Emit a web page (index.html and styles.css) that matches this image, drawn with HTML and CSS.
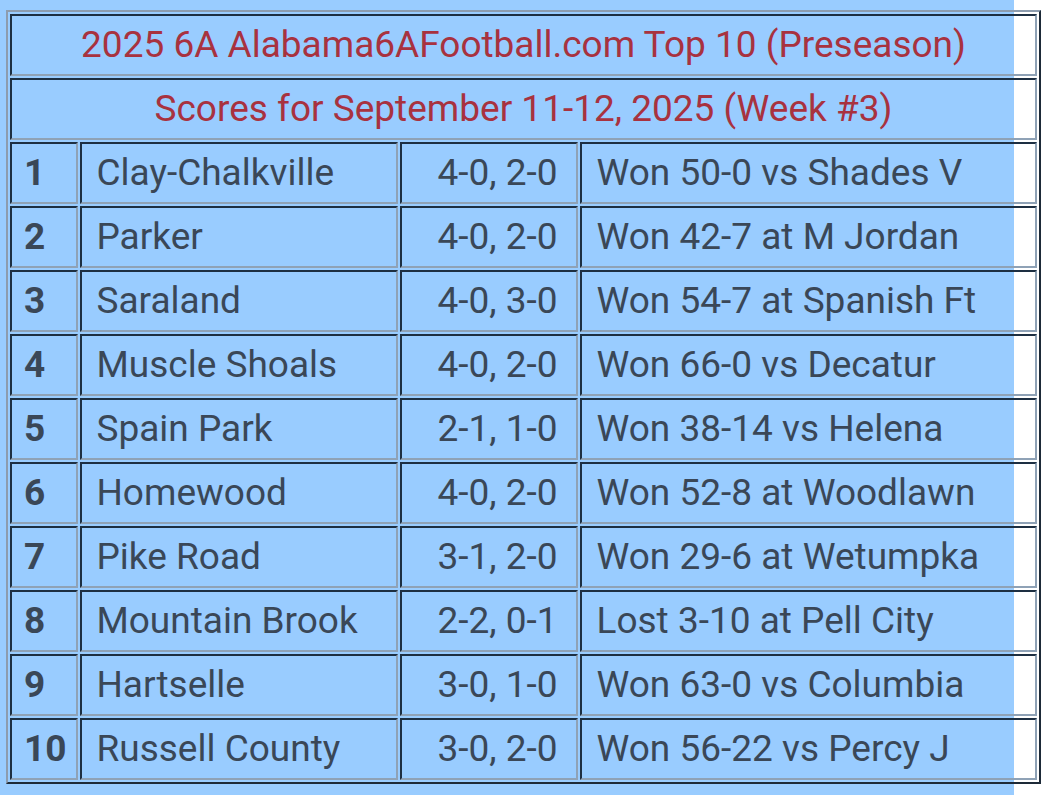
FILE: index.html
```html
<!DOCTYPE html>
<html>
<head>
<meta charset="utf-8">
<link rel="stylesheet" href="styles.css">
</head>
<body>
<div class="page">
  <table class="rank">
    <tr><td class="head" colspan="4">2025 6A Alabama6AFootball.com Top 10 (Preseason)</td></tr>
    <tr><td class="head" colspan="4">Scores for September 11-12, 2025 (Week #3)</td></tr>
    <tr><td class="num">1</td><td class="team">Clay-Chalkville</td><td class="rec">4-0, 2-0</td><td class="res">Won 50-0 vs Shades V</td></tr>
    <tr><td class="num">2</td><td class="team">Parker</td><td class="rec">4-0, 2-0</td><td class="res">Won 42-7 at M Jordan</td></tr>
    <tr><td class="num">3</td><td class="team">Saraland</td><td class="rec">4-0, 3-0</td><td class="res">Won 54-7 at Spanish Ft</td></tr>
    <tr><td class="num">4</td><td class="team">Muscle Shoals</td><td class="rec">4-0, 2-0</td><td class="res">Won 66-0 vs Decatur</td></tr>
    <tr><td class="num">5</td><td class="team">Spain Park</td><td class="rec">2-1, 1-0</td><td class="res">Won 38-14 vs Helena</td></tr>
    <tr><td class="num">6</td><td class="team">Homewood</td><td class="rec">4-0, 2-0</td><td class="res">Won 52-8 at Woodlawn</td></tr>
    <tr><td class="num">7</td><td class="team">Pike Road</td><td class="rec">3-1, 2-0</td><td class="res">Won 29-6 at Wetumpka</td></tr>
    <tr><td class="num">8</td><td class="team">Mountain Brook</td><td class="rec">2-2, 0-1</td><td class="res">Lost 3-10 at Pell City</td></tr>
    <tr><td class="num">9</td><td class="team">Hartselle</td><td class="rec">3-0, 1-0</td><td class="res">Won 63-0 vs Columbia</td></tr>
    <tr><td class="num">10</td><td class="team">Russell County</td><td class="rec">3-0, 2-0</td><td class="res">Won 56-22 vs Percy J</td></tr>
  </table>
</div>
</body>
</html>
```
FILE: styles.css
```css
html, body {
  margin: 0;
  padding: 0;
  background: #ffffff;
}
.page {
  width: 1014px;
  min-height: 795px;
  box-sizing: border-box;
  padding: 10px 0 0 6px;
  background: #99ccff;
  font-family: Roboto, "Noto Sans", sans-serif;
}
.rank {
  width: 1035px;
  border-collapse: separate;
  border-spacing: 2px;
  border-style: solid;
  border-width: 2px;
  border-color: #8d9cae #1d2a38 #1d2a38 #8d9cae;
  color: #3a4757;
}
.rank td {
  height: 58px;
  padding: 0 14px;
  border-style: solid;
  border-width: 2px;
  border-color: #1d2f42 #8fa2b6 #8fa2b6 #1d2f42;
  font-size: 37px;
  line-height: 44px;
  white-space: nowrap;
}
.rank td.head {
  text-align: center;
  color: #a8323f;
  font-size: 37px;
}
.rank td.num {
  width: 42px;
  padding: 0 10px 0 12px;
  font-weight: bold;
}
.rank td.team {
  width: 286px;
}
.rank td.rec {
  width: 146px;
  padding: 0 6px 0 22px;
  text-align: center;
}
```
